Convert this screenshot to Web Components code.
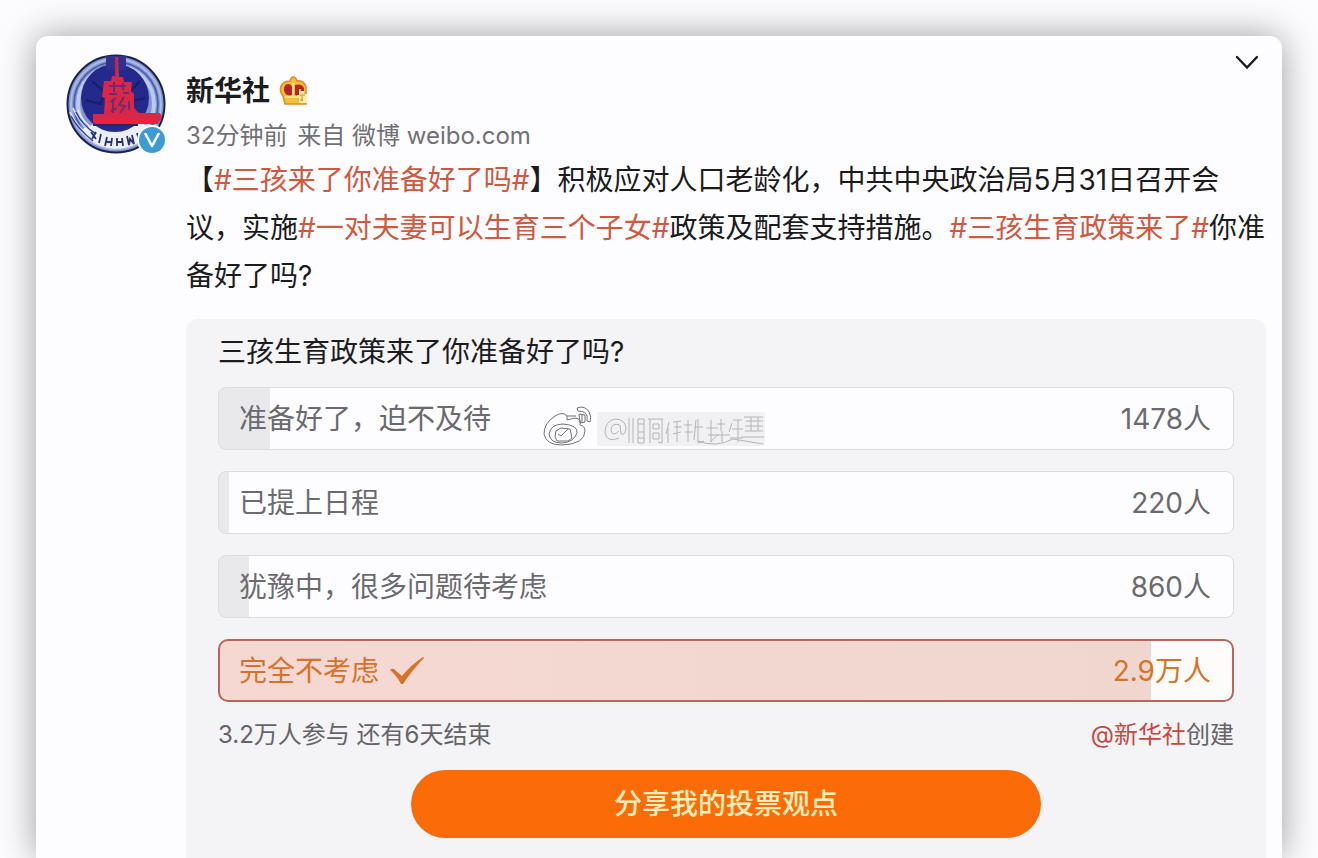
<!DOCTYPE html>
<html lang="zh-CN">
<head>
<meta charset="utf-8">
<meta name="viewport" content="width=device-width, initial-scale=1">
<title>新华社的微博</title>
<style>
    html {
        height: 100%;
    }

    body {
        margin: 0;
        min-height: 100%;
        box-sizing: border-box;
        padding: 36px 36px 0;
        display: flex;
        overflow: hidden;
        background: #fcfbfe;
        color: #1c1c1e;
        font-family: Inter, "Noto Sans CJK SC", sans-serif;
        font-size: 28px;
        line-height: 48px;
    }
</style>
</head>
<body>
<weibo-card>
    <weibo-avatar slot="avatar"></weibo-avatar>
    <weibo-author slot="author" name="新华社" time="32分钟前" source="微博 weibo.com"></weibo-author>
    <span>【<weibo-topic>三孩来了你准备好了吗</weibo-topic>】积极应对人口老龄化，中共中央政治局5月31日召开会议，实施<weibo-topic>一对夫妻可以生育三个子女</weibo-topic>政策及配套支持措施。<weibo-topic>三孩生育政策来了</weibo-topic>你准备好了吗?</span>
    <weibo-poll slot="poll"></weibo-poll>
</weibo-card>

<script>
class WeiboCard extends HTMLElement {
    constructor() {
        super();
        this.attachShadow({ mode: 'open' });
        this.shadowRoot.innerHTML = `
            <style>
                :host {
                    flex: 1;
                    min-width: 0;
                    display: flex;
                    gap: 20px;
                    position: relative;
                    box-sizing: border-box;
                    padding: 18px 16px 0 30px;
                    border-radius: 12px 12px 0 0;
                    background: #fdfcfe;
                    box-shadow: 0 0 36px rgba(0, 0, 0, 0.38);
                }

                .main {
                    flex: 1;
                    min-width: 0;
                    padding-top: 17px;
                }

                .text {
                    margin: 0 0 19px;
                }

                .more {
                    position: absolute;
                    top: 12px;
                    right: 20px;
                    width: 30px;
                    height: 30px;
                    padding: 0;
                    border: 0;
                    background: none;
                    cursor: pointer;
                }

                svg {
                    display: block;
                }
            </style>
            <slot name="avatar"></slot>
            <article class="main">
                <slot name="author"></slot>
                <p class="text"><slot></slot></p>
                <slot name="poll"></slot>
            </article>
            <button class="more" type="button" aria-label="更多">
                <svg width="30" height="30" viewBox="0 0 30 30" fill="none" stroke="#1c1c1e" stroke-width="2.4" stroke-linecap="round">
                    <path d="M5 9 15 19.500 25 9"/>
                </svg>
            </button>
        `;
    }
}

class WeiboAvatar extends HTMLElement {
    constructor() {
        super();
        this.attachShadow({ mode: 'open' });
        this.shadowRoot.innerHTML = `
            <style>
                :host {
                    display: block;
                    flex: none;
                    width: 100px;
                    height: 104px;
                }

                svg {
                    display: block;
                }
            </style>
            <svg width="100" height="104" viewBox="0 0 100 104" fill="none">
                <circle cx="50" cy="50" r="48.500" fill="#8495cf" stroke="#1b2150" stroke-width="2"/>
                <!-- engraved rings -->
                <circle cx="50" cy="50" r="45" stroke="#a9b8e4" stroke-width="2"/>
                <circle cx="50" cy="50" r="42" stroke="#4259a8" stroke-width="1.500"/>
                <circle cx="50" cy="50" r="38" stroke="#bcc9ed" stroke-width="4"/>
                <path d="M14 76A44 44 0 0 0 86 76L72 66 28 70Z" fill="#eceffa"/>
                <path d="M4 58q6 14 22 26M7 54q5 14 22 26M12 56q5 13 18 21" stroke="#e3e8f7" stroke-width="1.500"/>
                <path d="M5 62q7 13 22 25M10 58q6 13 20 22" stroke="#31408f" stroke-width="1.500"/>
                <circle cx="49" cy="44" r="34" fill="#232a8c"/>
                <path d="M40 2H60V16H40Z" fill="#30318a"/>
                <path d="M26 27l12 11 2-8M74 27L62 40M20 46l14 4 3-7M66 47l13-3" stroke="#171e66" stroke-width="2"/>
                <!-- tower -->
                <path d="M49 3h3l1 20h4l1 5h8l-1 9 3 3v14l5 5h21l2 4-4 7H30l-3-1v-9h11l1-16-3-1 2-16h7l1-5h3Z" fill="#d92745"/>
                <path d="M50 3V24" stroke="#a22c68" stroke-width="1.500"/>
                <path d="M43 32h17M43 40h8M57 39h6M48 28v10M57 29v7M44 48l6-4M45 57l6-3M47 46v13M58 43l-5 8 6 1-5 7M63 47v9" stroke="#6a2c72" stroke-width="2"/>
                <path d="M29 67H90" stroke="#f02236" stroke-width="4"/>
                <path d="M27 71H72" stroke="#232865" stroke-width="2"/>
                <!-- rim lettering -->
                <path d="M25 78l5 7M30 78l-4 7M35 80l-2 9M41 83l-2 9M46 84l-1 8M40 88h6M51 84v8M56 84l1 8M51 88h5M61 82l2 9 1-6 4 5-2-9M71 79l2 7 4-2-2-7" stroke="#29326d" stroke-width="1.800"/>
                <!-- verified badge -->
                <circle cx="86" cy="86" r="15" fill="#fcfbfe"/>
                <circle cx="86" cy="86" r="13" fill="#3d9bd3"/>
                <path d="M79.500 80 86 92l6.500-12" stroke="#fff" stroke-width="2.600" stroke-linecap="round" stroke-linejoin="round"/>
            </svg>
        `;
    }
}

class WeiboAuthor extends HTMLElement {
    constructor() {
        super();
        this.attachShadow({ mode: 'open' });
        this.shadowRoot.innerHTML = `
            <style>
                :host {
                    display: block;
                    line-height: 40px;
                }

                .name {
                    display: flex;
                    align-items: center;
                    gap: 8px;
                    margin-bottom: 5px;
                }

                a {
                    color: inherit;
                    font-weight: bold;
                    text-decoration: none;
                }

                .meta {
                    color: #717074;
                    font-size: 24px;
                }

                time {
                    margin-right: 3px;
                }
            </style>
            <div class="name">
                <a href="#"></a>
                <svg width="32" height="32" viewBox="0 0 32 32" aria-hidden="true">
                    <path d="M7 29 5 21Q1 16 3 11q3-5 9-5 1-4 3-4 3 0 4 4 7-1 9 6v17Z" fill="#f6bd3b" stroke="#dc8e28" stroke-width="1.500"/>
                    <path d="M14 20Q7 22 6 15q0-6 4-6 3 0 4 3ZM17 10q7-2 9 3v4h-3v-3h-2v7l-4-1Z" fill="#b8232a"/>
                    <path d="M7 22H20M15 8V21" stroke="#ffe27a" stroke-width="2"/>
                    <path d="M21 16h5v3h3v9h-8v-5h-2v-3h2Z" fill="#fff0a6"/>
                    <path d="M22 20h5M24 20v6M22 25h3" fill="none" stroke="#c98a32"/>
                </svg>
            </div>
            <div class="meta"><time></time> 来自 <span></span></div>
        `;
    }

    connectedCallback() {
        this.shadowRoot.querySelector('a').textContent = this.getAttribute('name');
        this.shadowRoot.querySelector('time').textContent = this.getAttribute('time');
        this.shadowRoot.querySelector('span').textContent = this.getAttribute('source');
    }
}

class WeiboTopic extends HTMLElement {
    constructor() {
        super();
        this.attachShadow({ mode: 'open' });
        // No whitespace around the link, it would show up inside the sentence
        this.shadowRoot.innerHTML = `<style>
                :host {
                    display: inline;
                }

                a {
                    color: #cf583e;
                    text-decoration: none;
                }
            </style><a href="#">#<slot></slot>#</a>`;
    }
}

// Faint logo and smudged signature laid over the first option
class WeiboWatermark extends HTMLElement {
    constructor() {
        super();
        this.attachShadow({ mode: 'open' });
        this.shadowRoot.innerHTML = `
            <style>
                :host {
                    display: block;
                    pointer-events: none;
                }

                svg {
                    display: block;
                }
            </style>
            <svg width="224" height="44" viewBox="0 0 224 44" fill="none" aria-hidden="true">
                <rect x="54" y="7" width="168" height="34" rx="3" fill="#e6e5e8" opacity=".5"/>
                <g stroke="#737276" stroke-width="1">
                    <path d="M24 11Q20 6 12 11Q1 18 1 29q2 11 18 11 23-1 23-14 0-5-5-6 2-6-5-7l-8 2v-4M24 11h9"/>
                    <path d="M6 29q2-10 14-10 15 1 14 9-3 9-15 10Q7 38 6 29Z"/>
                    <path d="M13 26l5-3 9 1 2 9-4 3H14l-2-4ZM15 29l3 2 7-7"/>
                    <path d="M34 3q8-3 12 4 3 5 1 10l-3-1q2-10-9-10ZM36 9l6 1v7l-5 1Zm3 1v7"/>
                </g>
                <g stroke="#b4b3b7" stroke-width="1">
                    <path d="M76 33q-12 5-14-5 0-12 10-14 10 0 11 9-1 8-5 6l-1-9q-9-3-9 6 2 6 8 0M86 13v25M90 13v25"/>
                    <path d="M95 14h6v24h-6ZM95 19h6M95 27h6M95 33h6M105 14h15M107 14v24M119 14v24l-4-1M110 19h6v5h-6ZM110 28h6v6h-6Z"/>
                    <path d="M126 17l-3 12M125 23v15M130 17l8-1M131 22h8M130 29l8-2M134 17v20M145 15v22M141 20h8M142 27h8M153 15l-2 20M151 22h9M155 14v24l6-2"/>
                    <path d="M168 15v22M163 23h12M165 30h10l-8 7M178 14v12M174 19h8M174 30h13M179 26v11M189 18l-3 9M190 15h9M189 24h11M195 15v22M187 33h13"/>
                    <path d="M201 12h19M203 16h17M202 21h18M202 26h18M198 32h23M208 12v14M215 12v14M155 36q18 7 35-2l30 5"/>
                </g>
            </svg>
        `;
    }
}

class WeiboPoll extends HTMLElement {
    constructor() {
        super();
        this.attachShadow({ mode: 'open' });
        this.options = [
            { text: '准备好了，迫不及待', count: '1478人', share: 5, watermark: true },
            { text: '已提上日程', count: '220人', share: 1 },
            { text: '犹豫中，很多问题待考虑', count: '860人', share: 3 },
            { text: '完全不考虑', count: '2.9万人', share: 92, voted: true }
        ];
        this.setupContent();
    }

    setupContent() {
        this.shadowRoot.innerHTML = `
            <style>
                :host {
                    display: block;
                    padding: 13px 32px 20px;
                    border-radius: 12px 12px 0 0;
                    background: #f4f3f6;
                }

                fieldset {
                    display: grid;
                    gap: 21px;
                    min-width: 0;
                    margin: 0;
                    padding: 0;
                    border: 0;
                }

                legend {
                    padding: 0;
                    margin-bottom: 15px;
                    line-height: 40px;
                }

                .option {
                    position: relative;
                    display: flex;
                    align-items: center;
                    justify-content: space-between;
                    height: 63px;
                    box-sizing: border-box;
                    padding: 0 22px 0 20px;
                    border: 1px solid #dcdbdf;
                    border-radius: 8px;
                    background: linear-gradient(to right, #e9e9eb var(--share), #fdfcfe var(--share));
                    color: #6b6a6e;
                    cursor: pointer;
                }

                .option:has(input:checked) {
                    border: 2px solid #b9655a;
                    padding: 0 21px 0 19px;
                    border-radius: 10px;
                    background: linear-gradient(to right, #f6d8d3, #efd7cf var(--share), #fdfcfb var(--share));
                    color: #d67327;
                }

                input {
                    position: absolute;
                    opacity: 0;
                    margin: 0;
                }

                .text {
                    display: flex;
                    align-items: center;
                    gap: 10px;
                }

                weibo-watermark {
                    position: absolute;
                    left: 32%;
                    bottom: 0;
                }

                .footer {
                    display: flex;
                    justify-content: space-between;
                    margin: 13px 0 15px;
                    color: #646367;
                    font-size: 24px;
                    line-height: 40px;
                }

                .footer a {
                    color: #c9483e;
                    text-decoration: none;
                }

                .share {
                    display: block;
                    width: 62%;
                    height: 68px;
                    margin: 0 auto;
                    padding: 0;
                    border: 0;
                    border-radius: 34px;
                    background: #fb6c09;
                    color: #fdeebb;
                    font: inherit;
                    font-weight: 500;
                    cursor: pointer;
                }
            </style>
            <fieldset>
                <legend>三孩生育政策来了你准备好了吗?</legend>
                ${this.options.map((option, i) => this.renderOption(option, i)).join('')}
            </fieldset>
            <div class="footer">
                <span>3.2万人参与 还有6天结束</span>
                <span><a href="#">@新华社</a>创建</span>
            </div>
            <button class="share" type="button">分享我的投票观点</button>
        `;
    }

    renderOption(option, i) {
        const tick = `
            <svg width="36" height="28" viewBox="0 0 36 28" aria-hidden="true">
                <path d="M1 13q3-3 6 1l6 5Q22 8 34 0l1 1Q24 12 14 27h-2Q8 19 1 13Z" fill="#d67327"/>
            </svg>`;
        return `
            <label class="option" for="option-${i}" style="--share: ${option.share}%">
                <input type="radio" name="vote" id="option-${i}" ${option.voted ? 'checked' : ''}>
                <span class="text">${option.text}${option.voted ? tick : ''}</span>
                ${option.watermark ? '<weibo-watermark></weibo-watermark>' : ''}
                <span>${option.count}</span>
            </label>`;
    }
}

// Register the components
customElements.define('weibo-card', WeiboCard);
customElements.define('weibo-avatar', WeiboAvatar);
customElements.define('weibo-author', WeiboAuthor);
customElements.define('weibo-topic', WeiboTopic);
customElements.define('weibo-watermark', WeiboWatermark);
customElements.define('weibo-poll', WeiboPoll);
</script>
</body>
</html>
